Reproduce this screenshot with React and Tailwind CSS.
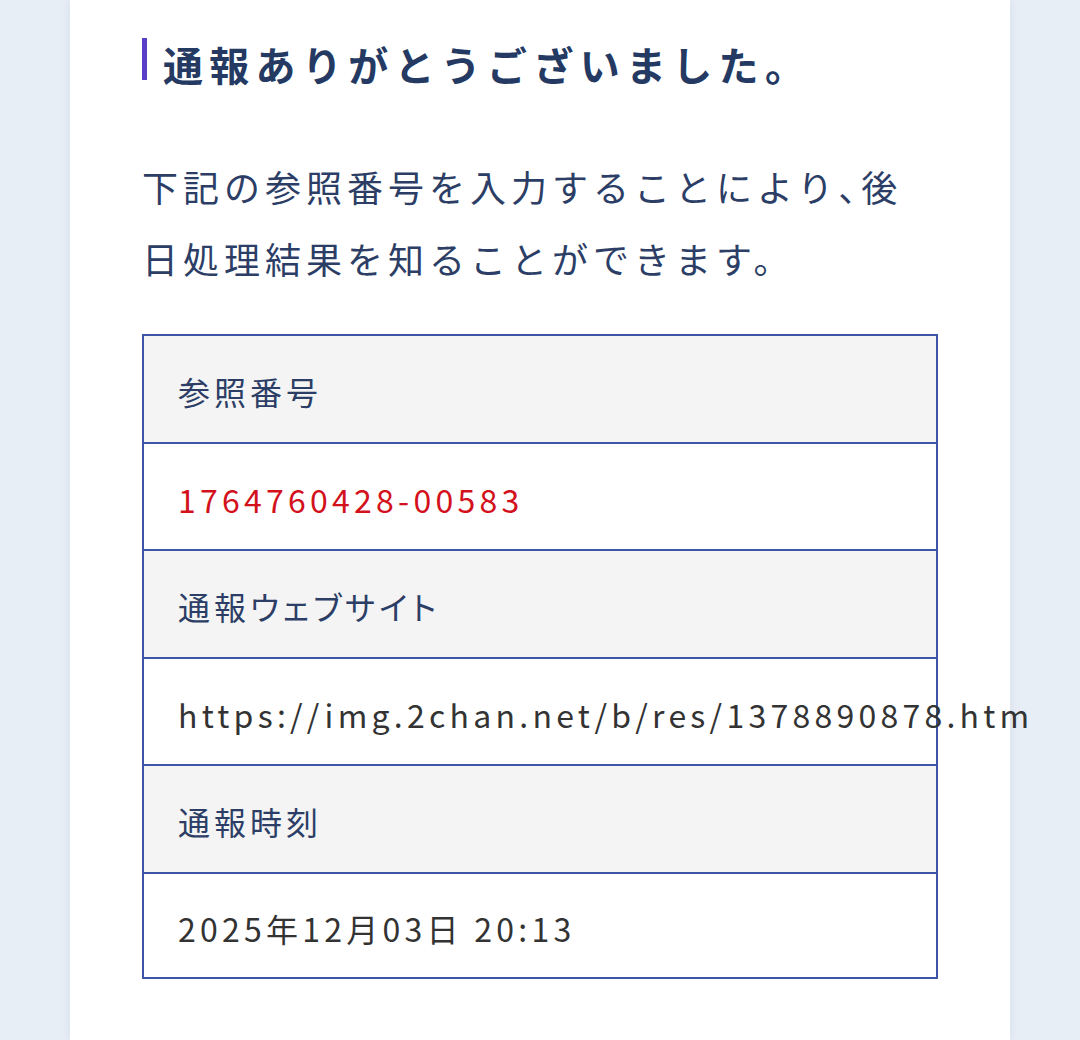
import React from 'react';

const rows = [
  { label: '参照番号', value: '1764760428-00583', red: true },
  { label: '通報ウェブサイト', value: 'https://img.2chan.net/b/res/1378890878.htm' },
  { label: '通報時刻', value: '2025年12月03日 20:13' },
];

const font = { fontFamily: '"Noto Sans CJK JP", "Noto Sans", sans-serif' };

export default function App() {
  return (
    <div className="min-h-screen w-full bg-[#e8eef6] flex justify-center" style={font}>
      <div className="w-[940px] min-h-[1040px] bg-white shadow-[0_0_10px_rgba(150,165,190,0.25)] pl-[72px] pr-[72px] pt-[38px] pb-[60px]">
        {/* Heading */}
        <div className="flex items-start">
          <div className="w-[5px] h-[42px] bg-[#5a3ec8] shrink-0" />
          <h1 className="ml-[16px] mt-[2px] text-[40px] leading-[48px] font-bold tracking-[6.3px] text-[#253a63] whitespace-nowrap">
            通報ありがとうございました。
          </h1>
        </div>

        <p className="mt-[62px] text-[36px] leading-[72px] tracking-[5px] text-[#2c3e66] w-[790px]">
          下記の参照番号を入力することにより<span className="[font-feature-settings:'halt']">、</span>後日処理結果を知ることができます。
        </p>

        {/* Result table */}
        <div className="mt-[40px] w-[796px] border-2 border-[#3d55a6]">
          {rows.map((r, i) => (
            <React.Fragment key={r.label}>
              <div className={`bg-[#f4f4f4] flex items-center pt-[4px] px-[34px] text-[32px] tracking-[4px] text-[#2c3e66] [font-feature-settings:'palt'] ${i > 0 ? 'h-[108px] border-t-2 border-[#3d55a6]' : 'h-[106px]'}`}>
                {r.label}
              </div>
              <div className={`bg-white flex items-center pt-[4px] px-[34px] text-[32px] tracking-[4.25px] whitespace-nowrap border-t-2 border-[#3d55a6] ${i === rows.length - 1 ? 'h-[105px]' : 'h-[107px]'} ${r.red ? 'text-[#d3111c]' : 'text-[#333333]'}`}>
                {r.value}
              </div>
            </React.Fragment>
          ))}
        </div>
      </div>
    </div>
  );
}
